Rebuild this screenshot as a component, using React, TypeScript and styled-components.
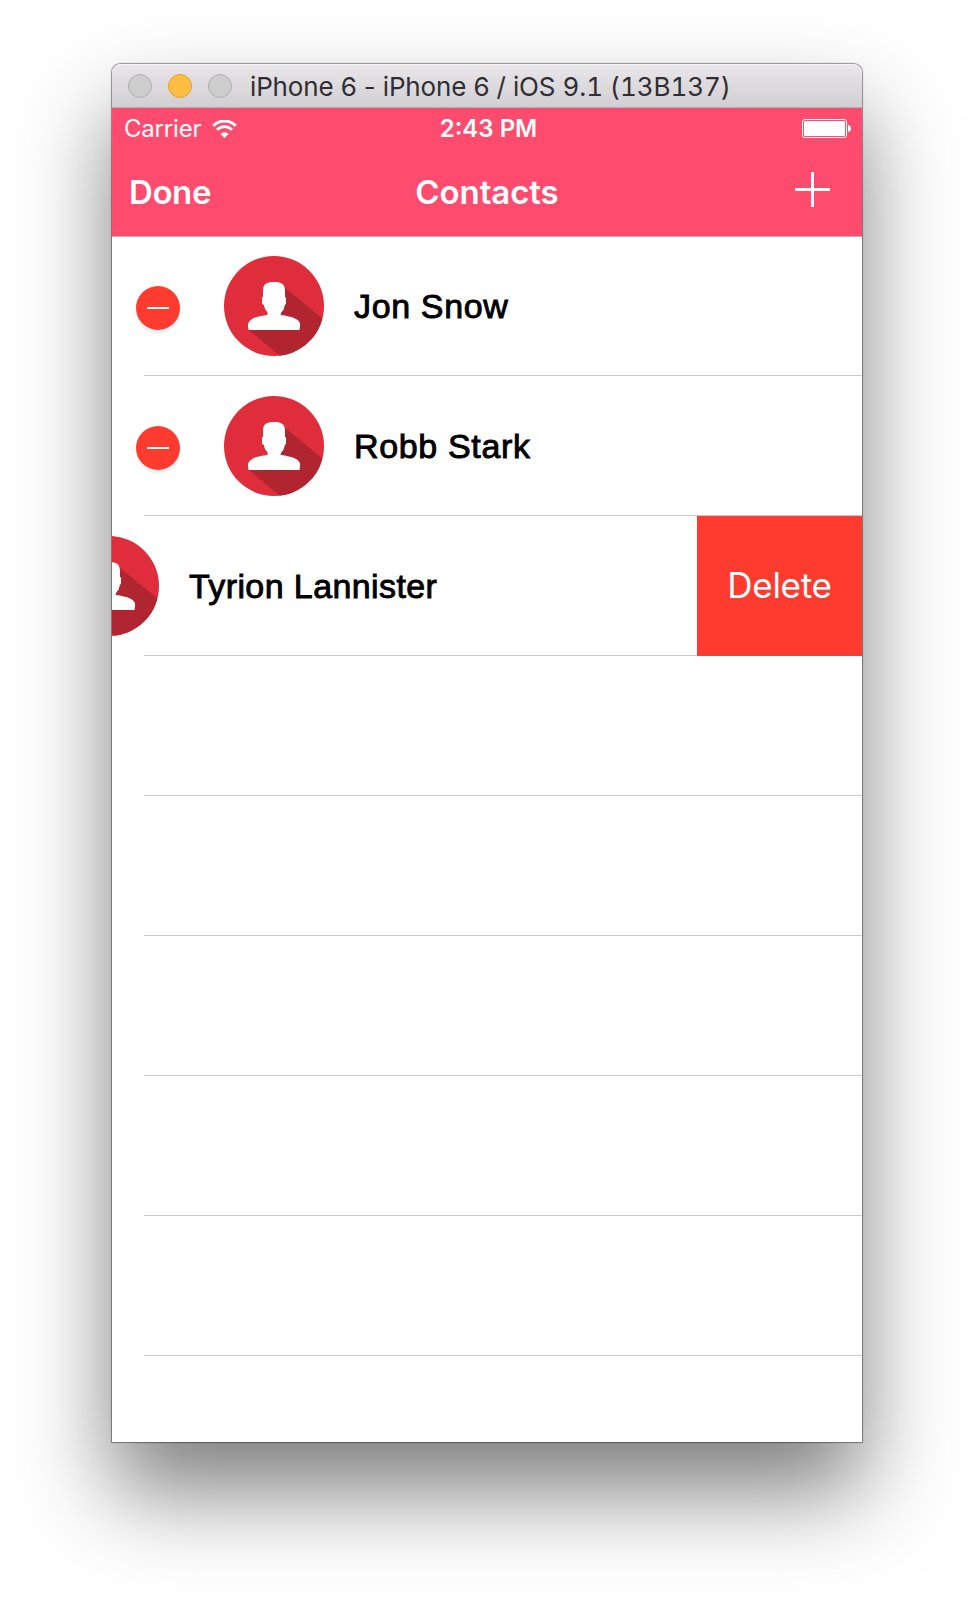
import React from "react";
import styled, { createGlobalStyle } from "styled-components";

const GlobalStyle = createGlobalStyle`
  * { box-sizing: border-box; }
  body { margin: 0; background: #fff; }
`;

const Desktop = styled.main`
  height: 1602px;
  padding: 64px 112px 0;
  overflow: hidden;
  font-family: Inter, "Liberation Sans", sans-serif;
`;

const Window = styled.section`
  width: 750px;
  height: 1378px;
  display: flex;
  flex-direction: column;
  border-radius: 9px 9px 0 0;
  background: #fff;
  box-shadow: 0 0 1px 0.5px rgba(0, 0, 0, 0.4), 0 50px 90px rgba(0, 0, 0, 0.5);
`;

const TitleBar = styled.header`
  height: 44px;
  flex: none;
  display: flex;
  align-items: center;
  gap: 16px;
  padding-left: 16px;
  border-radius: 9px 9px 0 0;
  border-bottom: 1px solid #b3b0b3;
  background: linear-gradient(#e9e7e9, #d1cfd1);
  box-shadow: inset 0 1px 0 #f5f4f5;
`;

const Light = styled.span<{ $active?: boolean }>`
  width: 24px;
  height: 24px;
  border-radius: 50%;
  background: ${(p) => (p.$active ? "#ffbe41" : "#cfcecf")};
  border: 1px solid ${(p) => (p.$active ? "#e09f33" : "#b0afb0")};
`;

const WindowTitle = styled.h1`
  margin: 3px 0 0 2px;
  font-size: 26px;
  font-weight: 400;
  line-height: 32px;
  letter-spacing: -0.15px;
  color: #302e32;
  white-space: nowrap;
`;

const Build = styled.span`
  font-variant-numeric: tabular-nums;
  letter-spacing: -0.08px;
`;

const StatusBar = styled.div`
  height: 40px;
  flex: none;
  display: grid;
  grid-template-columns: 1fr auto 1fr;
  align-items: center;
  padding: 1px 11px 0 12px;
  background: #ff4c6e;
  color: #fff;
  font-size: 24px;
  line-height: 30px;
`;

const Carrier = styled.div`
  display: flex;
  align-items: center;
  gap: 11px;
`;

const CarrierName = styled.span`
  letter-spacing: -0.2px;
`;

const Clock = styled.time`
  padding-left: 2px;
  font-weight: 600;
  letter-spacing: 0;
`;

const BatteryIcon = styled.svg`
  justify-self: end;
`;

const NavBar = styled.nav`
  height: 88px;
  flex: none;
  display: grid;
  grid-template-columns: 1fr auto 1fr;
  align-items: center;
  padding: 0 16px;
  background: #ff4c6e;
  color: #fff;
  box-shadow: 0 1px 0 #b2b2b2;
  position: relative;
`;

const NavButton = styled.button`
  justify-self: start;
  padding: 0 0 0 1px;
  border: 0;
  background: none;
  color: inherit;
  font: 600 33px/42px Inter, sans-serif;
  letter-spacing: -0.4px;
`;

const AddButton = styled(NavButton)`
  justify-self: end;
  display: flex;
  margin: -5px 16px 0 0;
`;

const NavTitle = styled.h2`
  margin: 0;
  font-size: 33px;
  font-weight: 600;
  line-height: 42px;
  letter-spacing: -0.1px;
`;

const List = styled.ul`
  margin: 0;
  padding: 0;
  list-style: none;
  flex: 1;
  overflow: hidden;
`;

const Row = styled.li`
  height: 140px;
  display: flex;
`;

const Cell = styled.div`
  flex: 1;
  min-width: 0;
  display: flex;
  align-items: center;
  overflow: hidden;
  background: linear-gradient(#c8c7cc, #c8c7cc) 32px 100% / 100% 1px no-repeat;
`;

const RemoveButton = styled.button`
  width: 44px;
  height: 44px;
  flex: none;
  display: flex;
  align-items: center;
  justify-content: center;
  margin: 4px 0 0 24px;
  padding: 0;
  border: 0;
  border-radius: 50%;
  background: #ff3b30;
  box-shadow: 0 4px 1px #f2f2f2;
`;

const Dash = styled.span`
  width: 22px;
  height: 2px;
  background: #fff;
`;

const AvatarIcon = styled.svg<{ $swiped?: boolean }>`
  flex: none;
  margin-left: ${(p) => (p.$swiped ? "-53px" : "44px")};
`;

const Name = styled.span<{ $swiped?: boolean }>`
  margin-left: 30px;
  color: #000;
  font: 34px/40px "Liberation Sans", sans-serif;
  letter-spacing: ${(p) => (p.$swiped ? "0.4px" : "0.65px")};
  -webkit-text-stroke: 0.9px #000;
  white-space: nowrap;
`;

const DeleteButton = styled.button`
  width: 165px;
  flex: none;
  padding: 0 0 2px;
  border: 0;
  background: #ff3b30;
  color: #fff;
  font: 400 35px/44px Inter, sans-serif;
  letter-spacing: -0.3px;
`;

const Avatar = ({ swiped, id }: { swiped?: boolean; id: string }) => (
  <AvatarIcon $swiped={swiped} width="100" height="100" viewBox="0 0 100 100">
    <clipPath id={id}>
      <circle cx="50" cy="50" r="50" />
    </clipPath>
    <g clipPath={`url(#${id})`}>
      <rect width="100" height="100" fill="#e02d3c" />
      <path d="M60 31 L98.5 62.500 L105 68 V105 H62 L25 74 L50 60Z" fill="#b02530" />
    </g>
    <path
      d="M39 41V35C39 28.500 42 26 50 26S61 28.500 61 35V41Q62.500 41 62 44V48Q60.500 48 60.500 50.500Q60 54 57.500 56L56.500 59Q66 60 71 62.500Q77 65.500 76 70L75.500 74H24.700L24 70Q23.500 65.500 29 62.500Q34 60 43.500 59V56Q40.500 54 40 49Q38 48.500 38 47V42Q38 41 39 41Z"
      fill="#fff"
    />
  </AvatarIcon>
);

const contacts = [
  { name: "Jon Snow" },
  { name: "Robb Stark" },
  { name: "Tyrion Lannister", swiped: true },
];

const EMPTY_ROWS = 6;

export default function App() {
  return (
    <>
      <GlobalStyle />
      <Desktop>
        <Window>
          <TitleBar>
            <Light />
            <Light $active />
            <Light />
            <WindowTitle>
              iPhone 6 - iPhone 6 / iOS <Build>9.1 (13B137)</Build>
            </WindowTitle>
          </TitleBar>
          <StatusBar>
            <Carrier>
              <CarrierName>Carrier</CarrierName>
              <svg width="25" height="18" viewBox="0 0 25 18" fill="none" stroke="#fff">
                <path d="M1.200 5.700A16 16 0 0 1 23.800 5.700" strokeWidth="3" />
                <path d="M5 9.800A10.600 10.600 0 0 1 20 9.800" strokeWidth="2.800" />
                <path d="M8.200 13.800Q12.500 10.800 16.800 13.800L12.500 18Z" fill="#fff" stroke="none" />
              </svg>
            </Carrier>
            <Clock>2:43 PM</Clock>
            <BatteryIcon width="49" height="19" viewBox="0 0 49 19" fill="#fff">
              <rect x=".5" y=".5" width="44" height="18" rx="2.500" fill="none" stroke="#fff" />
              <rect x="2" y="2" width="41" height="15" rx="1.500" />
              <path d="M46 6Q49 6.500 49 9.500T46 13Z" />
            </BatteryIcon>
          </StatusBar>
          <NavBar>
            <NavButton>Done</NavButton>
            <NavTitle>Contacts</NavTitle>
            <AddButton aria-label="Add contact">
              <svg width="35" height="35" viewBox="0 0 35 35" stroke="#fff" strokeWidth="3">
                <path d="M17.500 0V35M0 17.500H35" />
              </svg>
            </AddButton>
          </NavBar>
          <List>
            {contacts.map((c, i) => (
              <Row key={c.name}>
                <Cell>
                  {!c.swiped && (
                    <RemoveButton aria-label="Remove">
                      <Dash />
                    </RemoveButton>
                  )}
                  <Avatar swiped={c.swiped} id={`avatar-${i}`} />
                  <Name $swiped={c.swiped}>{c.name}</Name>
                </Cell>
                {c.swiped && <DeleteButton>Delete</DeleteButton>}
              </Row>
            ))}
            {Array.from({ length: EMPTY_ROWS }, (_, i) => (
              <Row key={i}>
                <Cell />
              </Row>
            ))}
          </List>
        </Window>
      </Desktop>
    </>
  );
}
